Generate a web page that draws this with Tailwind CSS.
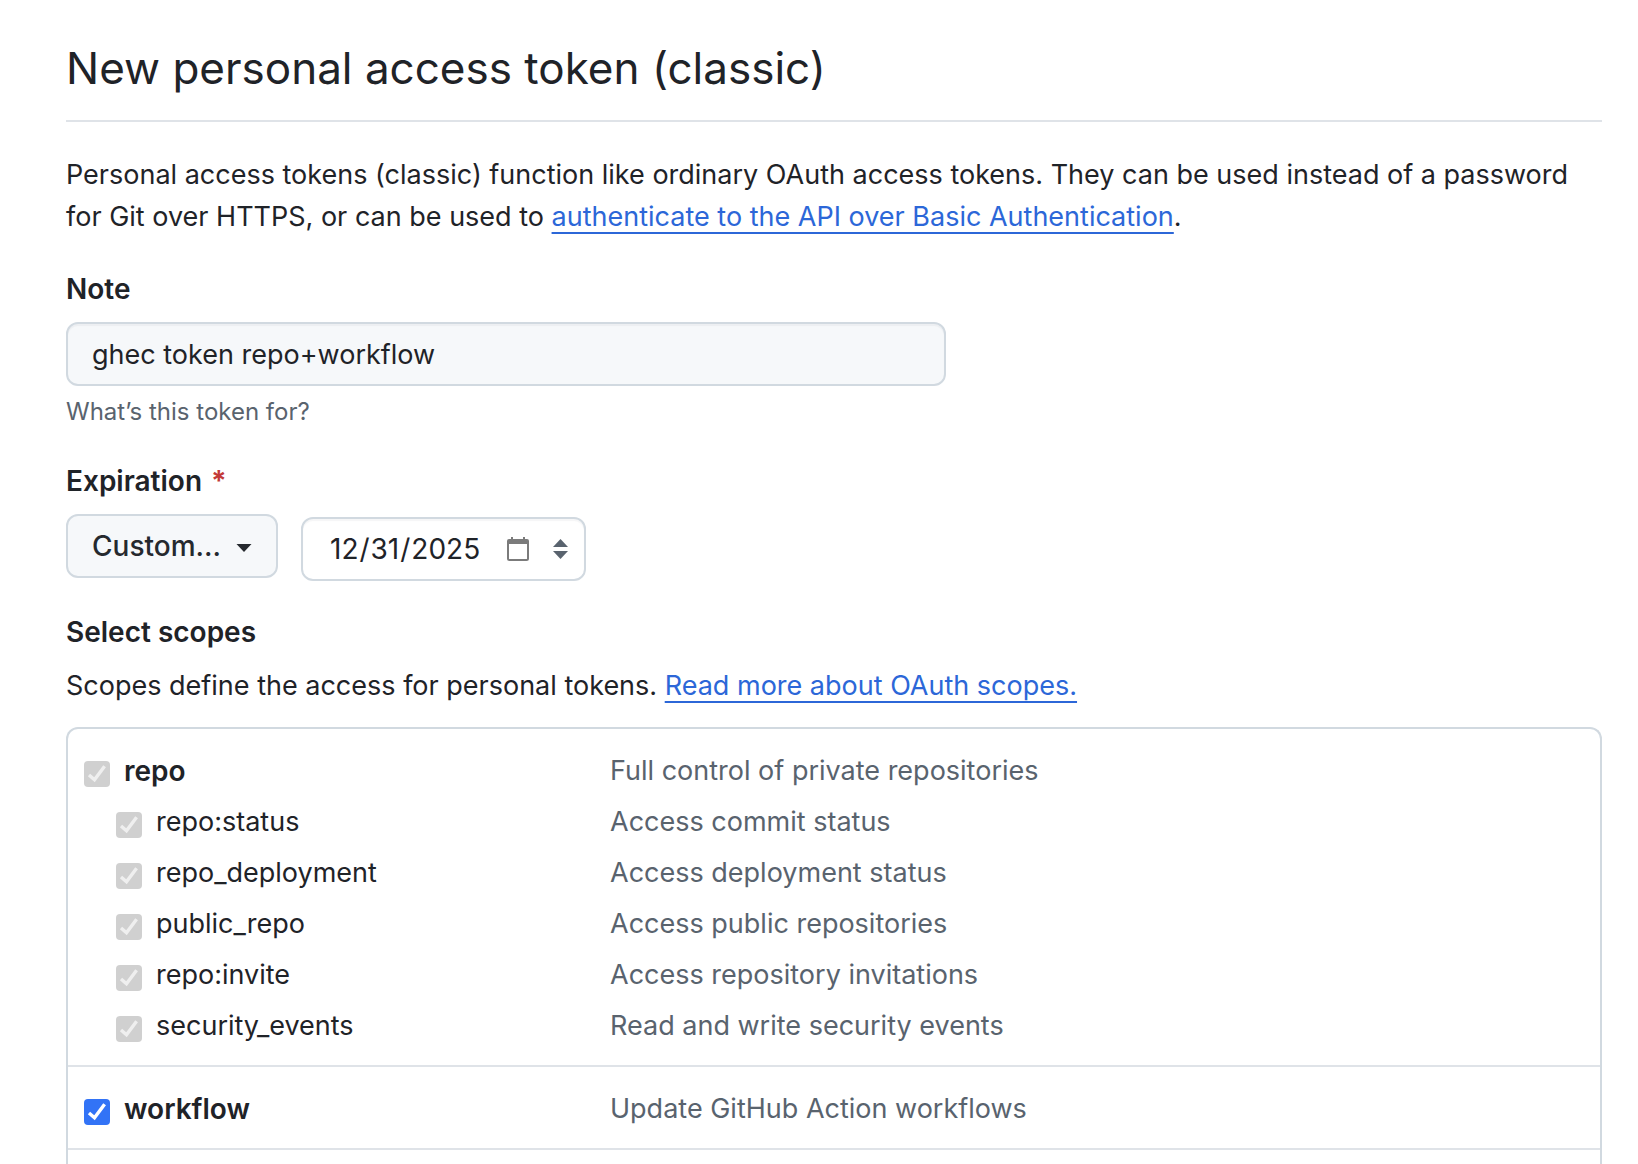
<!DOCTYPE html>
<html lang="en">
<head>
<meta charset="utf-8">
<meta name="viewport" content="width=device-width, initial-scale=1">
<title>New personal access token (classic)</title>
<script src="https://cdn.jsdelivr.net/npm/@tailwindcss/browser@4"></script>
</head>
<body class="bg-white font-['Inter','Liberation_Sans',sans-serif] text-[27px] leading-[42px] text-[#1f2328]">
<svg class="hidden" aria-hidden="true">
  <symbol id="check" viewBox="0 0 26 26"><path d="M5 14 10.500 18.800 20.600 5.200" fill="none" stroke="currentColor" stroke-width="3.400"/></symbol>
</svg>
<main class="flex min-h-screen flex-col pt-8 pr-9 pl-[66px]">
  <h1 class="border-b-2 border-[#dfe3e8] pb-4 text-[44px] leading-[72px]">New personal access token (classic)</h1>
  <p class="mt-8">Personal access tokens (classic) function like ordinary OAuth access tokens. They can be used instead of a password for Git over HTTPS, or can be used to <a href="#" class="text-[#2c67d8] underline decoration-2 underline-offset-[6px] [text-decoration-skip-ink:none]">authenticate to the API over Basic Authentication</a>.</p>

  <form class="flex grow flex-col">
    <label for="note" class="mt-[30px] text-[28px] font-semibold">Note</label>
    <input id="note" type="text" value="ghec token repo+workflow" class="mt-3 h-16 w-full max-w-[880px] rounded-xl border-2 border-[#d1d9e0] bg-[#f6f8fa] px-6 shadow-[inset_0_2px_1px_rgba(31,35,40,0.04)]">
    <p class="mt-2 text-2xl leading-9 text-[#59636e]">What’s this token for?</p>

    <label for="expiration" class="mt-[30px] text-[28px] font-semibold">Expiration <span class="ml-[2px] font-bold text-[#c33a37]">*</span></label>
    <div class="mt-3 flex gap-[23px] text-[28px]">
      <button id="expiration" type="button" class="flex h-16 w-[212px] items-center justify-between rounded-xl border-2 border-[#d1d9e0] bg-[#f6f8fa] px-6 font-medium text-[#25292e]">
        Custom...
        <svg class="mt-1 h-2 w-4" viewBox="0 0 16 8" fill="currentColor"><path d="M.5 0h15L8 8z"/></svg>
      </button>
      <div class="mt-[3px] flex h-16 w-[285px] items-center rounded-xl border-2 border-[#d1d9e0] pr-4 pl-[26px] shadow-[inset_0_2px_1px_rgba(31,35,40,0.04)]">
        <input type="date" value="2025-12-31" aria-label="Expiration date" class="w-[166px] grow bg-transparent [&::-webkit-calendar-picker-indicator]:hidden">
        <svg class="mr-6 h-6 w-[22px] shrink-0" viewBox="0 0 22 24" fill="none"><path d="M1 5v16.500q0 1.500 1.500 1.500h17q1.500 0 1.500-1.500V5" stroke="#7b7b7b" stroke-width="2"/><path d="M2 2h2V0h2v2h10V0h2v2h2q2 0 2 2v3H0V4q0-2 2-2z" fill="#7b7b7b"/></svg>
        <svg class="h-5 w-[15px] shrink-0" viewBox="0 0 15 20" fill="#59636e"><path d="M7.500 0 15 8H0zM7.500 20 15 12H0z"/></svg>
      </div>
    </div>

    <h2 class="mt-[30px] text-[28px] font-semibold">Select scopes</h2>
    <p class="mt-3">Scopes define the access for personal tokens. <a href="#" class="text-[#2c67d8] underline decoration-2 underline-offset-[6px] [text-decoration-skip-ink:none]">Read more about OAuth scopes.</a></p>

    <div class="mt-5 grow rounded-t-xl border-2 border-b-0 border-[#d1d9e0]">
      <ul class="flex flex-col gap-[9px] border-b-2 border-[#dfe3e8] px-4 pt-[21px] pb-[18px]">
        <li class="grid grid-cols-[526px_1fr]">
          <label class="flex gap-[14px] text-[28px] font-semibold"><span class="mt-[11px] grid size-[26px]"><input type="checkbox" checked disabled class="col-start-1 row-start-1 size-[26px] appearance-none rounded-sm bg-[#d0d0d0]"><svg class="pointer-events-none col-start-1 row-start-1 size-[26px] text-[#efefef]"><use href="#check"/></svg></span>repo</label>
          <span class="text-[#59636e]">Full control of private repositories</span>
        </li>
        <li class="grid grid-cols-[526px_1fr]">
          <label class="flex gap-[14px] pl-8"><span class="mt-[11px] grid size-[26px]"><input type="checkbox" checked disabled class="col-start-1 row-start-1 size-[26px] appearance-none rounded-sm bg-[#d0d0d0]"><svg class="pointer-events-none col-start-1 row-start-1 size-[26px] text-[#efefef]"><use href="#check"/></svg></span>repo:status</label>
          <span class="text-[#59636e]">Access commit status</span>
        </li>
        <li class="grid grid-cols-[526px_1fr]">
          <label class="flex gap-[14px] pl-8"><span class="mt-[11px] grid size-[26px]"><input type="checkbox" checked disabled class="col-start-1 row-start-1 size-[26px] appearance-none rounded-sm bg-[#d0d0d0]"><svg class="pointer-events-none col-start-1 row-start-1 size-[26px] text-[#efefef]"><use href="#check"/></svg></span>repo_deployment</label>
          <span class="text-[#59636e]">Access deployment status</span>
        </li>
        <li class="grid grid-cols-[526px_1fr]">
          <label class="flex gap-[14px] pl-8"><span class="mt-[11px] grid size-[26px]"><input type="checkbox" checked disabled class="col-start-1 row-start-1 size-[26px] appearance-none rounded-sm bg-[#d0d0d0]"><svg class="pointer-events-none col-start-1 row-start-1 size-[26px] text-[#efefef]"><use href="#check"/></svg></span>public_repo</label>
          <span class="text-[#59636e]">Access public repositories</span>
        </li>
        <li class="grid grid-cols-[526px_1fr]">
          <label class="flex gap-[14px] pl-8"><span class="mt-[11px] grid size-[26px]"><input type="checkbox" checked disabled class="col-start-1 row-start-1 size-[26px] appearance-none rounded-sm bg-[#d0d0d0]"><svg class="pointer-events-none col-start-1 row-start-1 size-[26px] text-[#efefef]"><use href="#check"/></svg></span>repo:invite</label>
          <span class="text-[#59636e]">Access repository invitations</span>
        </li>
        <li class="grid grid-cols-[526px_1fr]">
          <label class="flex gap-[14px] pl-8"><span class="mt-[11px] grid size-[26px]"><input type="checkbox" checked disabled class="col-start-1 row-start-1 size-[26px] appearance-none rounded-sm bg-[#d0d0d0]"><svg class="pointer-events-none col-start-1 row-start-1 size-[26px] text-[#efefef]"><use href="#check"/></svg></span>security_events</label>
          <span class="text-[#59636e]">Read and write security events</span>
        </li>
      </ul>
      <ul class="border-b-2 border-[#dfe3e8] px-4 pt-[21px] pb-[18px]">
        <li class="grid grid-cols-[526px_1fr]">
          <label class="flex gap-[14px] text-[28px] font-semibold"><span class="mt-[11px] grid size-[26px]"><input type="checkbox" checked class="col-start-1 row-start-1 size-[26px] appearance-none rounded-sm bg-[#d0d0d0] checked:bg-[#3273f6]"><svg class="pointer-events-none col-start-1 row-start-1 size-[26px] text-white"><use href="#check"/></svg></span>workflow</label>
          <span class="text-[#59636e]">Update GitHub Action workflows</span>
        </li>
      </ul>
    </div>
  </form>
</main>
</body>
</html>
